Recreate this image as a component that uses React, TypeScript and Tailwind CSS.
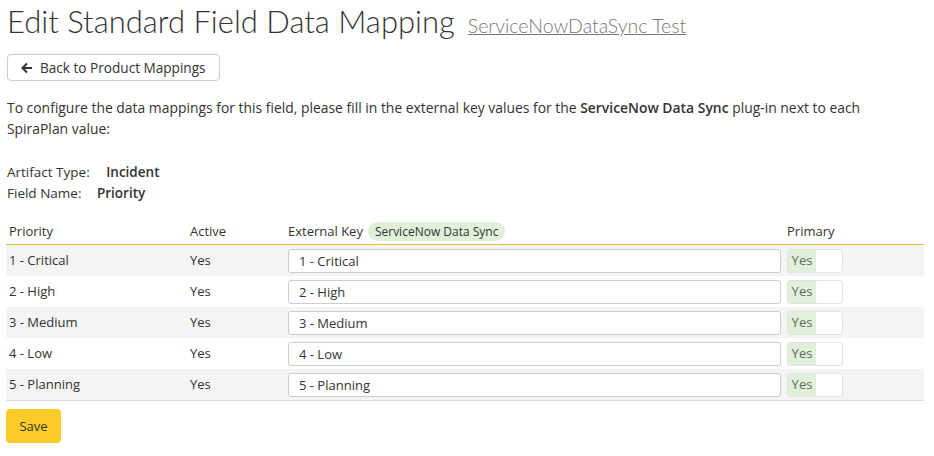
import React from 'react';

const rows = [
  { name: '1 - Critical', active: 'Yes' },
  { name: '2 - High', active: 'Yes' },
  { name: '3 - Medium', active: 'Yes' },
  { name: '4 - Low', active: 'Yes' },
  { name: '5 - Planning', active: 'Yes' },
];

function Toggle() {
  return (
    <div className="flex h-[24px] w-[56px] overflow-hidden rounded-[3px] border border-[#e2e2e2] bg-white text-[13px] text-[#666]">
      <span className="flex w-[28px] items-center justify-center bg-[#e1f0d9]">Yes</span>
      <span className="flex-1" />
    </div>
  );
}

export default function App() {
  return (
    <div className="min-h-[456px] bg-white px-[7px] pt-[2px] text-[13px] text-[#333] [font-family:'Open_Sans',sans-serif]">
      <div className="flex items-baseline gap-[13px]">
        <h1 className="text-[31px] font-light leading-[38px] text-[#333] [font-family:Lato,sans-serif]">
          Edit Standard Field Data Mapping
        </h1>
        <a href="#" className="text-[19.5px] font-light text-[#777] underline [font-family:Lato,sans-serif]">
          ServiceNowDataSync Test
        </a>
      </div>

      <button className="mt-[14px] flex h-[27px] items-center gap-[7px] rounded-[4px] border border-[#ccc] bg-white px-[13px] text-[13.6px] text-[#333]">
        <svg width="12" height="12" viewBox="0 0 12 12" fill="none" stroke="#333" strokeWidth="2">
          <path d="M11 6H2M6 1.5 1.5 6 6 10.5" />
        </svg>
        Back to Product Mappings
      </button>

      <p className="mt-[16px] max-w-[890px] text-[13.9px] leading-[21px]">
        To configure the data mappings for this field, please fill in the external key values for the{' '}
        <b className="font-semibold">ServiceNow Data Sync</b> plug-in next to each SpiraPlan value:
      </p>

      <div className="mt-[23px] text-[13.5px] leading-[21px]">
        <div>
          Artifact Type: <span className="ml-[13px] font-semibold">Incident</span>
        </div>
        <div>
          Field Name: <span className="ml-[12px] font-semibold">Priority</span>
        </div>
      </div>

      <div className="-ml-px mt-[17px] w-[918px]">
        <div className="flex h-[24px] items-center border-b border-[#f0c030] pb-[3px]">
          <div className="w-[184px] pl-[3px]">Priority</div>
          <div className="w-[98px]">Active</div>
          <div className="w-[499px]">
            External Key
            <span className="ml-[5px] rounded-full bg-[#e1f0d9] px-[7px] py-[1px] text-[12px]">
              ServiceNow Data Sync
            </span>
          </div>
          <div>Primary</div>
        </div>
        <div className="border-b border-[#dcdcdc]">
          {rows.map((r, i) => (
            <div
              key={r.name}
              className={i % 2 === 0 ? 'flex h-[31px] items-center bg-[#f4f4f4]' : 'flex h-[31px] items-center bg-white'}
            >
              <div className="w-[184px] pl-[3px]">{r.name}</div>
              <div className="w-[98px]">{r.active}</div>
              <div className="w-[499px] pr-[6px]">
                <input
                  readOnly
                  value={r.name}
                  className="h-[24px] w-full rounded-[3px] border border-[#ccc] bg-white px-[10px] text-[13px] text-[#333] outline-none"
                />
              </div>
              <Toggle />
            </div>
          ))}
        </div>
      </div>

      <button className="-ml-px mt-[8px] h-[34px] w-[55px] rounded-[4px] bg-[#fccc29] text-[13px] text-[#333]">Save</button>
    </div>
  );
}
